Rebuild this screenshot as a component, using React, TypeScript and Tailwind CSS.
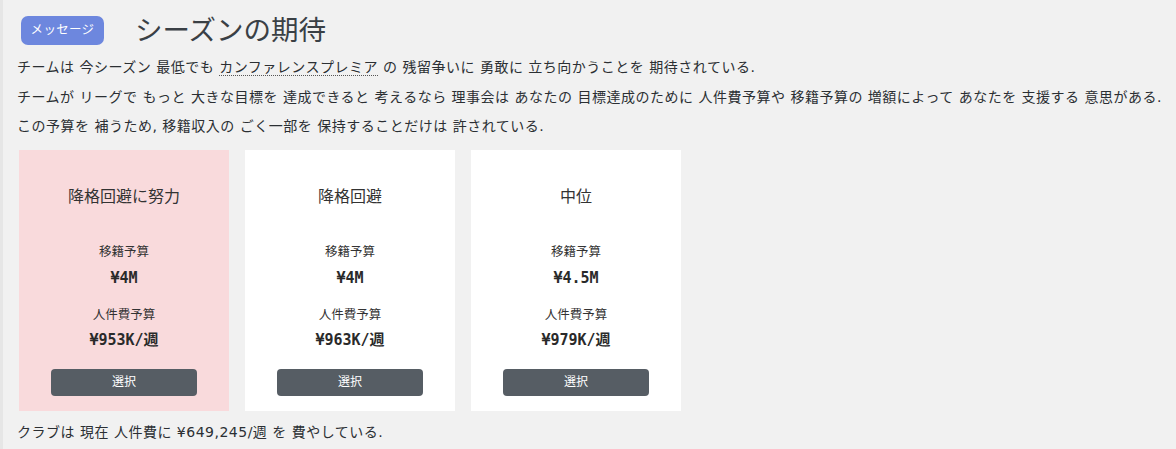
const cards = [
  { title: "降格回避に努力", transfer: "¥4M", wage: "¥953K/週", selected: true },
  { title: "降格回避", transfer: "¥4M", wage: "¥963K/週", selected: false },
  { title: "中位", transfer: "¥4.5M", wage: "¥979K/週", selected: false },
];

const body = { fontFamily: '"DejaVu Sans", "Noto Sans CJK JP", sans-serif' };
const mono = { fontFamily: '"DejaVu Sans Mono", "Noto Sans CJK JP", monospace' };

export default function App() {
  return (
    <div
      className="min-h-[449px] w-[1176px] bg-[#f1f1f1] border-l-[3px] border-[#e6e6e6] pl-[14px] pt-4 text-[#2b2f33]"
      style={body}
    >
      <div className="ml-1 flex items-center gap-[31px]">
        <span className="flex h-[29px] w-[83px] items-center justify-center rounded-[7px] bg-[#6d87de] text-[12.5px] tracking-[0.3px] text-white">
          メッセージ
        </span>
        <h1 className="text-[27.5px] leading-[29px] text-[#3a4045]">シーズンの期待</h1>
      </div>

      <div className="mt-2 text-[14px] leading-[29.5px] tracking-[0.5px]">
        <p>
          チームは 今シーズン 最低でも{" "}
          <span className="border-b border-dotted border-[#555]">カンファレンスプレミア</span> の
          残留争いに 勇敢に 立ち向かうことを 期待されている.
        </p>
        <p>
          チームが リーグで もっと 大きな目標を 達成できると 考えるなら 理事会は あなたの 目標達成のために
          人件費予算や 移籍予算の 増額によって あなたを 支援する 意思がある.
        </p>
        <p>この予算を 補うため, 移籍収入の ごく一部を 保持することだけは 許されている.</p>
      </div>

      <div className="mt-[8px] ml-[2px] flex gap-4">
        {cards.map((c) => (
          <div
            key={c.title}
            className={`flex w-[210px] flex-col items-center px-8 pt-[35px] pb-[15px] ${
              c.selected ? "bg-[#f9dadc]" : "bg-white"
            }`}
          >
            <div className="text-[16px] leading-6 text-[#333]">{c.title}</div>
            <div className="mt-[34px] text-[12.5px] leading-[18px] text-[#333]">移籍予算</div>
            <div className="mt-[7px] text-[15px] font-bold leading-5 text-[#2a2a2a]" style={mono}>
              {c.transfer}
            </div>
            <div className="mt-[18px] text-[12.5px] leading-[18px] text-[#333]">人件費予算</div>
            <div className="mt-[6px] text-[15px] font-bold leading-5 text-[#2a2a2a]" style={mono}>
              {c.wage}
            </div>
            <button className="mt-[19px] h-[27px] w-full rounded-[4px] bg-[#565d64] text-[12px] text-white">
              選択
            </button>
          </div>
        ))}
      </div>

      <p className="mt-[6px] text-[14px] leading-[30px] tracking-[0.5px]">
        クラブは 現在 人件費に ¥649,245/週 を 費やしている.
      </p>
    </div>
  );
}
